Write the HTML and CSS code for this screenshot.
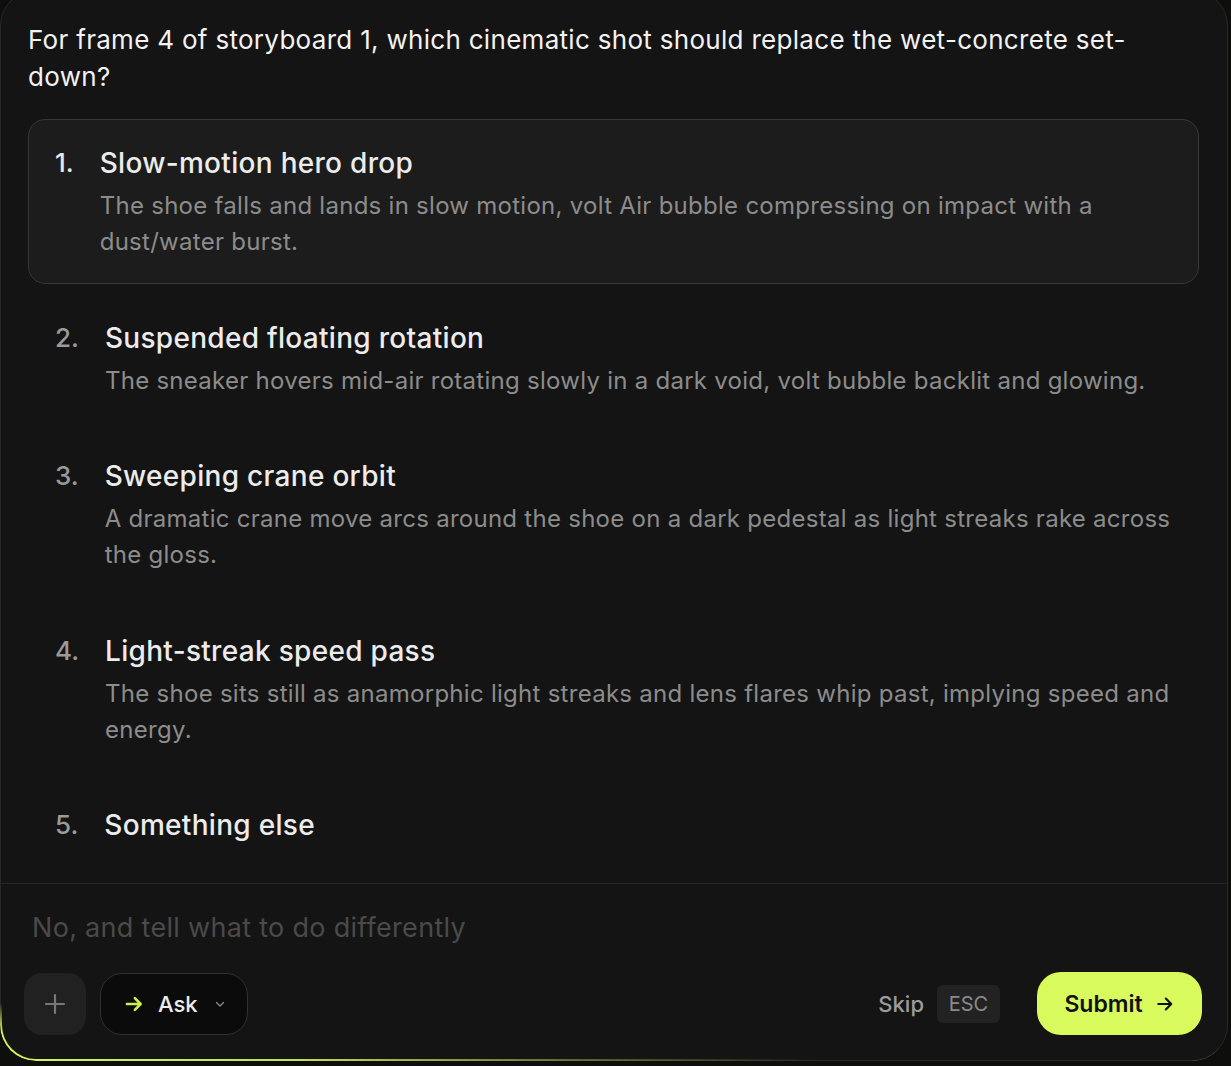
FILE: index.html
```html
<!DOCTYPE html>
<html lang="en">
<head>
<meta charset="utf-8">
<title>Question</title>
<link rel="stylesheet" href="styles.css">
</head>
<body>
<div class="panel">
  <div class="content">
    <p class="question">For frame 4 of storyboard 1, which cinematic shot should replace the wet-concrete set-down?</p>
    <ol class="options">
      <li class="option selected">
        <span class="num">1.</span>
        <div class="body">
          <div class="title">Slow-motion hero drop</div>
          <div class="desc">The shoe falls and lands in slow motion, volt Air bubble compressing on impact with a dust/water burst.</div>
        </div>
      </li>
      <li class="option">
        <span class="num">2.</span>
        <div class="body">
          <div class="title">Suspended floating rotation</div>
          <div class="desc">The sneaker hovers mid-air rotating slowly in a dark void, volt bubble backlit and glowing.</div>
        </div>
      </li>
      <li class="option">
        <span class="num">3.</span>
        <div class="body">
          <div class="title">Sweeping crane orbit</div>
          <div class="desc">A dramatic crane move arcs around the shoe on a dark pedestal as light streaks rake across the gloss.</div>
        </div>
      </li>
      <li class="option">
        <span class="num">4.</span>
        <div class="body">
          <div class="title">Light-streak speed pass</div>
          <div class="desc">The shoe sits still as anamorphic light streaks and lens flares whip past, implying speed and energy.</div>
        </div>
      </li>
      <li class="option">
        <span class="num">5.</span>
        <div class="body">
          <div class="title">Something else</div>
        </div>
      </li>
    </ol>
  </div>
  <div class="composer">
    <div class="placeholder">No, and tell what to do differently</div>
    <div class="toolbar">
      <div class="left">
        <button class="plus" type="button" aria-label="Add">
          <svg width="24" height="24" viewBox="0 0 24 24"><path d="M12 3v18M3 12h18" stroke="#777" stroke-width="2.2" stroke-linecap="round" fill="none"/></svg>
        </button>
        <button class="ask" type="button">
          <svg class="ask-arrow" width="20" height="20" viewBox="0 0 24 24"><path d="M3.5 12h16M13 5l7 7-7 7" stroke="#cdf04f" stroke-width="3" stroke-linecap="round" stroke-linejoin="round" fill="none"/></svg>
          <span>Ask</span>
          <svg class="chev" width="12" height="12" viewBox="0 0 24 24"><path d="M5 9l7 7 7-7" stroke="#8a8a8a" stroke-width="2.6" stroke-linecap="round" stroke-linejoin="round" fill="none"/></svg>
        </button>
      </div>
      <div class="right">
        <span class="skip">Skip</span>
        <span class="esc">ESC</span>
        <button class="submit" type="button">
          <span>Submit</span>
          <svg width="20" height="20" viewBox="0 0 24 24"><path d="M4 12h15M13 5.5l6.5 6.5-6.5 6.5" stroke="#111" stroke-width="2.6" stroke-linecap="round" stroke-linejoin="round" fill="none"/></svg>
        </button>
      </div>
    </div>
  </div>
</div>
</body>
</html>
```

FILE: styles.css
```css
* { box-sizing: border-box; }
html, body {
  margin: 0;
  padding: 0;
  background: #0e0e0d;
  overflow: hidden;
}
body {
  font-family: Inter, "Noto Sans", sans-serif;
  width: 1231px;
  height: 1066px;
}
.panel {
  position: relative;
  margin-top: -10px;
  width: 1228px;
  height: 1071px;
  background: #141414;
  border: 1px solid #282826;
  border-radius: 36px;
  display: flex;
  flex-direction: column;
}
.panel::after {
  content: "";
  position: absolute;
  inset: -1px;
  border-radius: 36px;
  border: 2.5px solid #d4f55c;
  border-top-color: transparent;
  border-right-color: transparent;
  pointer-events: none;
  -webkit-mask-image: linear-gradient(to right, #000 0, rgba(0,0,0,0.9) 300px, rgba(0,0,0,0.4) 560px, transparent 820px), linear-gradient(to top, #000 0, #000 30px, transparent 58px);
  -webkit-mask-composite: source-in;
  mask-image: linear-gradient(to right, #000 0, rgba(0,0,0,0.9) 300px, rgba(0,0,0,0.4) 560px, transparent 820px), linear-gradient(to top, #000 0, #000 30px, transparent 58px);
  mask-composite: intersect;
}
.content {
  padding: 30px 28px 0 27px;
  border-bottom: 1px solid #262626;
}
.question {
  margin: 0;
  font-size: 26px;
  line-height: 37px;
  color: #f2f2f2;
  letter-spacing: 0.3px;
}
.options {
  list-style: none;
  margin: 24px 0 14px;
  padding: 0;
  display: flex;
  flex-direction: column;
  gap: 9.5px;
}
.option {
  display: flex;
  gap: 26px;
  padding: 23px 26px;
  border: 1px solid transparent;
  border-radius: 17px;
}
.option.selected {
  background: #1c1c1c;
  border-color: #363636;
}
.num {
  font-size: 26px;
  line-height: 40px;
  color: #9a9a9a;
  font-weight: 500;
}
.selected .num { color: #e6e6e6; }
.title {
  font-size: 28px;
  line-height: 40px;
  font-weight: 500;
  color: #ececec;
  letter-spacing: 0.3px;
}
.desc {
  margin-top: 5px;
  font-size: 24px;
  line-height: 36px;
  color: #8c8c8c;
  letter-spacing: 0.27px;
}
.composer {
  padding: 25px 25px 0 23px;
}
.placeholder {
  padding-left: 8px;
  font-size: 27px;
  line-height: 37px;
  color: #4a4a4a;
  letter-spacing: 0.3px;
}
.toolbar {
  margin-top: 26px;
  display: flex;
  align-items: center;
  justify-content: space-between;
}
.left, .right {
  display: flex;
  align-items: center;
}
.left { gap: 14px; }
button {
  font-family: inherit;
  cursor: pointer;
}
.plus {
  width: 62px;
  height: 62px;
  border: none;
  border-radius: 18px;
  background: #212121;
  display: flex;
  align-items: center;
  justify-content: center;
  padding: 0;
}
.ask {
  height: 62px;
  width: 148px;
  border: 1px solid #303030;
  border-radius: 22px;
  background: #0b0b0b;
  display: flex;
  align-items: center;
  padding: 0 0 0 23px;
  color: #ececec;
  font-size: 22px;
  font-weight: 500;
}
.ask-arrow { margin-right: 14px; }
.chev { margin-left: 16px; }
.skip {
  font-size: 22px;
  font-weight: 500;
  color: #9c9c9c;
}
.esc {
  margin-left: 13px;
  height: 38px;
  width: 63px;
  border-radius: 6px;
  background: #222222;
  color: #8a8a8a;
  font-size: 20px;
  display: flex;
  align-items: center;
  justify-content: center;
}
.submit {
  margin-left: 37px;
  width: 165px;
  height: 63px;
  border: none;
  border-radius: 24px;
  background: #d9fa5c;
  color: #111;
  font-size: 23px;
  font-weight: 600;
  display: flex;
  align-items: center;
  justify-content: center;
  gap: 12px;
  padding: 0;
}
```
